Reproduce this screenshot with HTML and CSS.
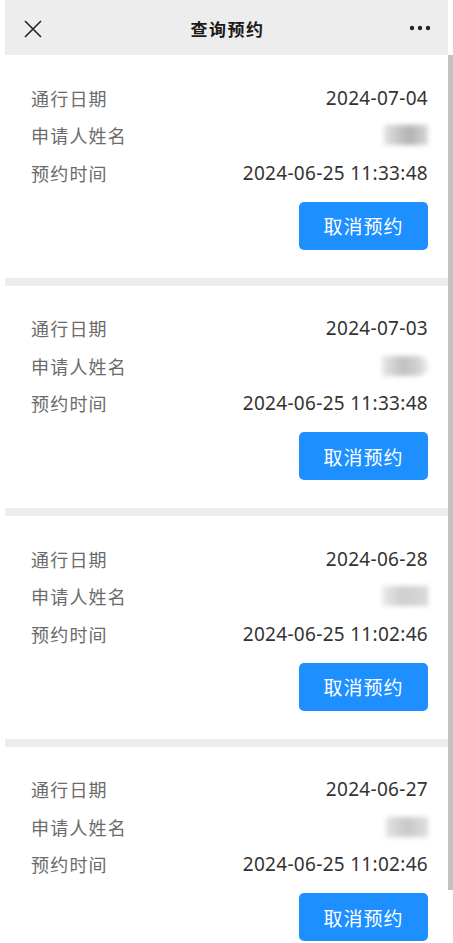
FILE: index.html
```html
<!DOCTYPE html>
<html lang="zh-CN">
<head>
    <meta charset="UTF-8">
    <meta name="viewport" content="width=device-width, initial-scale=1.0">
    <title>查询预约</title>
    <link rel="stylesheet" href="styles.css">
</head>
<body>
    <div class="screen">
        <div class="gutter"></div>

        <div class="page">
            <header class="topbar">
                <button class="topbar-btn close-btn" aria-label="关闭">
                    <svg width="18" height="18" viewBox="0 0 18 18">
                        <path d="M1 1 L17 17 M17 1 L1 17" stroke="#222" stroke-width="1.6" fill="none"/>
                    </svg>
                </button>
                <h1 class="topbar-title">查询预约</h1>
                <button class="topbar-btn more-btn" aria-label="更多">
                    <svg width="22" height="6" viewBox="0 0 22 6">
                        <circle cx="3" cy="3" r="2.2" fill="#222"/>
                        <circle cx="11" cy="3" r="2.2" fill="#222"/>
                        <circle cx="19" cy="3" r="2.2" fill="#222"/>
                    </svg>
                </button>
            </header>

            <div class="list">
                <div class="card">
                    <div class="row"><span class="label">通行日期</span><span class="value">2024-07-04</span></div>
                    <div class="row"><span class="label">申请人姓名</span><span class="name-mask mask-a"></span></div>
                    <div class="row"><span class="label">预约时间</span><span class="value">2024-06-25 11:33:48</span></div>
                    <div class="actions"><button class="cancel-btn">取消预约</button></div>
                </div>
                <div class="card">
                    <div class="row"><span class="label">通行日期</span><span class="value">2024-07-03</span></div>
                    <div class="row"><span class="label">申请人姓名</span><span class="name-mask mask-b"></span></div>
                    <div class="row"><span class="label">预约时间</span><span class="value">2024-06-25 11:33:48</span></div>
                    <div class="actions"><button class="cancel-btn">取消预约</button></div>
                </div>
                <div class="card">
                    <div class="row"><span class="label">通行日期</span><span class="value">2024-06-28</span></div>
                    <div class="row"><span class="label">申请人姓名</span><span class="name-mask mask-c"></span></div>
                    <div class="row"><span class="label">预约时间</span><span class="value">2024-06-25 11:02:46</span></div>
                    <div class="actions"><button class="cancel-btn">取消预约</button></div>
                </div>
                <div class="card">
                    <div class="row"><span class="label">通行日期</span><span class="value">2024-06-27</span></div>
                    <div class="row"><span class="label">申请人姓名</span><span class="name-mask mask-d"></span></div>
                    <div class="row"><span class="label">预约时间</span><span class="value">2024-06-25 11:02:46</span></div>
                    <div class="actions"><button class="cancel-btn">取消预约</button></div>
                </div>
            </div>
        </div>

        <div class="scrollbar">
            <div class="scrollbar-thumb"></div>
        </div>
    </div>
</body>
</html>
```

FILE: styles.css
```css
html, body {
    margin: 0;
    padding: 0;
    background: #fff;
    overflow: hidden;
}
body {
    font-family: "Noto Sans CJK SC", "Noto Sans", sans-serif;
}
.screen {
    display: flex;
    height: 943px;
}
.gutter {
    width: 5px;
    flex-shrink: 0;
}
.page {
    width: 443px;
    flex-shrink: 0;
    display: flex;
    flex-direction: column;
}
/* Top bar */
.topbar {
    height: 55px;
    flex-shrink: 0;
    background: #ededed;
    display: flex;
    align-items: center;
    justify-content: space-between;
    padding: 0 13px 0 13px;
}
.topbar-btn {
    background: none;
    border: none;
    padding: 0;
    width: 30px;
    height: 30px;
    display: flex;
    align-items: center;
    justify-content: center;
    cursor: pointer;
}
.close-btn {
    margin-top: 2px;
}
.more-btn {
    margin-top: 1px;
}
.topbar-title {
    margin: 2px 0 0 2px;
    font-size: 17px;
    font-weight: bold;
    color: #1a1a1a;
    letter-spacing: 1.5px;
}
/* Reservation list */
.list {
    display: flex;
    flex-direction: column;
}
.card {
    padding: 24px 20px 28px 26px;
    border-bottom: 8px solid #ededed;
}
.row {
    height: 37.5px;
    display: flex;
    align-items: center;
    justify-content: space-between;
}
.label {
    font-size: 18px;
    color: #6b6b6b;
    letter-spacing: 1.2px;
}
.value {
    font-family: "Noto Sans", sans-serif;
    font-size: 19px;
    color: #333;
    letter-spacing: 0.3px;
}
/* blurred applicant name */
.name-mask {
    display: block;
    width: 44px;
    height: 20px;
    filter: blur(2.5px);
    background: linear-gradient(90deg, #e2e2e2 0%, #c4c4c4 35%, #b2b2b2 60%, #d8d8d8 100%);
}
.mask-b {
    width: 46px;
    border-radius: 0 10px 10px 0;
    background: linear-gradient(90deg, #e6e6e6 0%, #c0c0c0 45%, #d0d0d0 75%, #e8e8e8 100%);
}
.mask-c {
    width: 46px;
    background: linear-gradient(90deg, #ececec 0%, #cecece 40%, #d8d8d8 100%);
}
.mask-d {
    width: 42px;
    background: linear-gradient(90deg, #e2e2e2 0%, #c8c8c8 50%, #dedede 100%);
}
.actions {
    display: flex;
    justify-content: flex-end;
    margin-top: 10px;
}
.cancel-btn {
    width: 129px;
    height: 48px;
    background: #1e8fff;
    color: #fff;
    border: none;
    border-radius: 5px;
    font-family: "Noto Sans CJK SC", sans-serif;
    font-size: 19px;
    letter-spacing: 1px;
    cursor: pointer;
}
/* Scrollbar */
.scrollbar {
    width: 5px;
    flex-shrink: 0;
    padding-top: 55px;
}
.scrollbar-thumb {
    height: 835px;
    background: #c2c2c2;
}
```
